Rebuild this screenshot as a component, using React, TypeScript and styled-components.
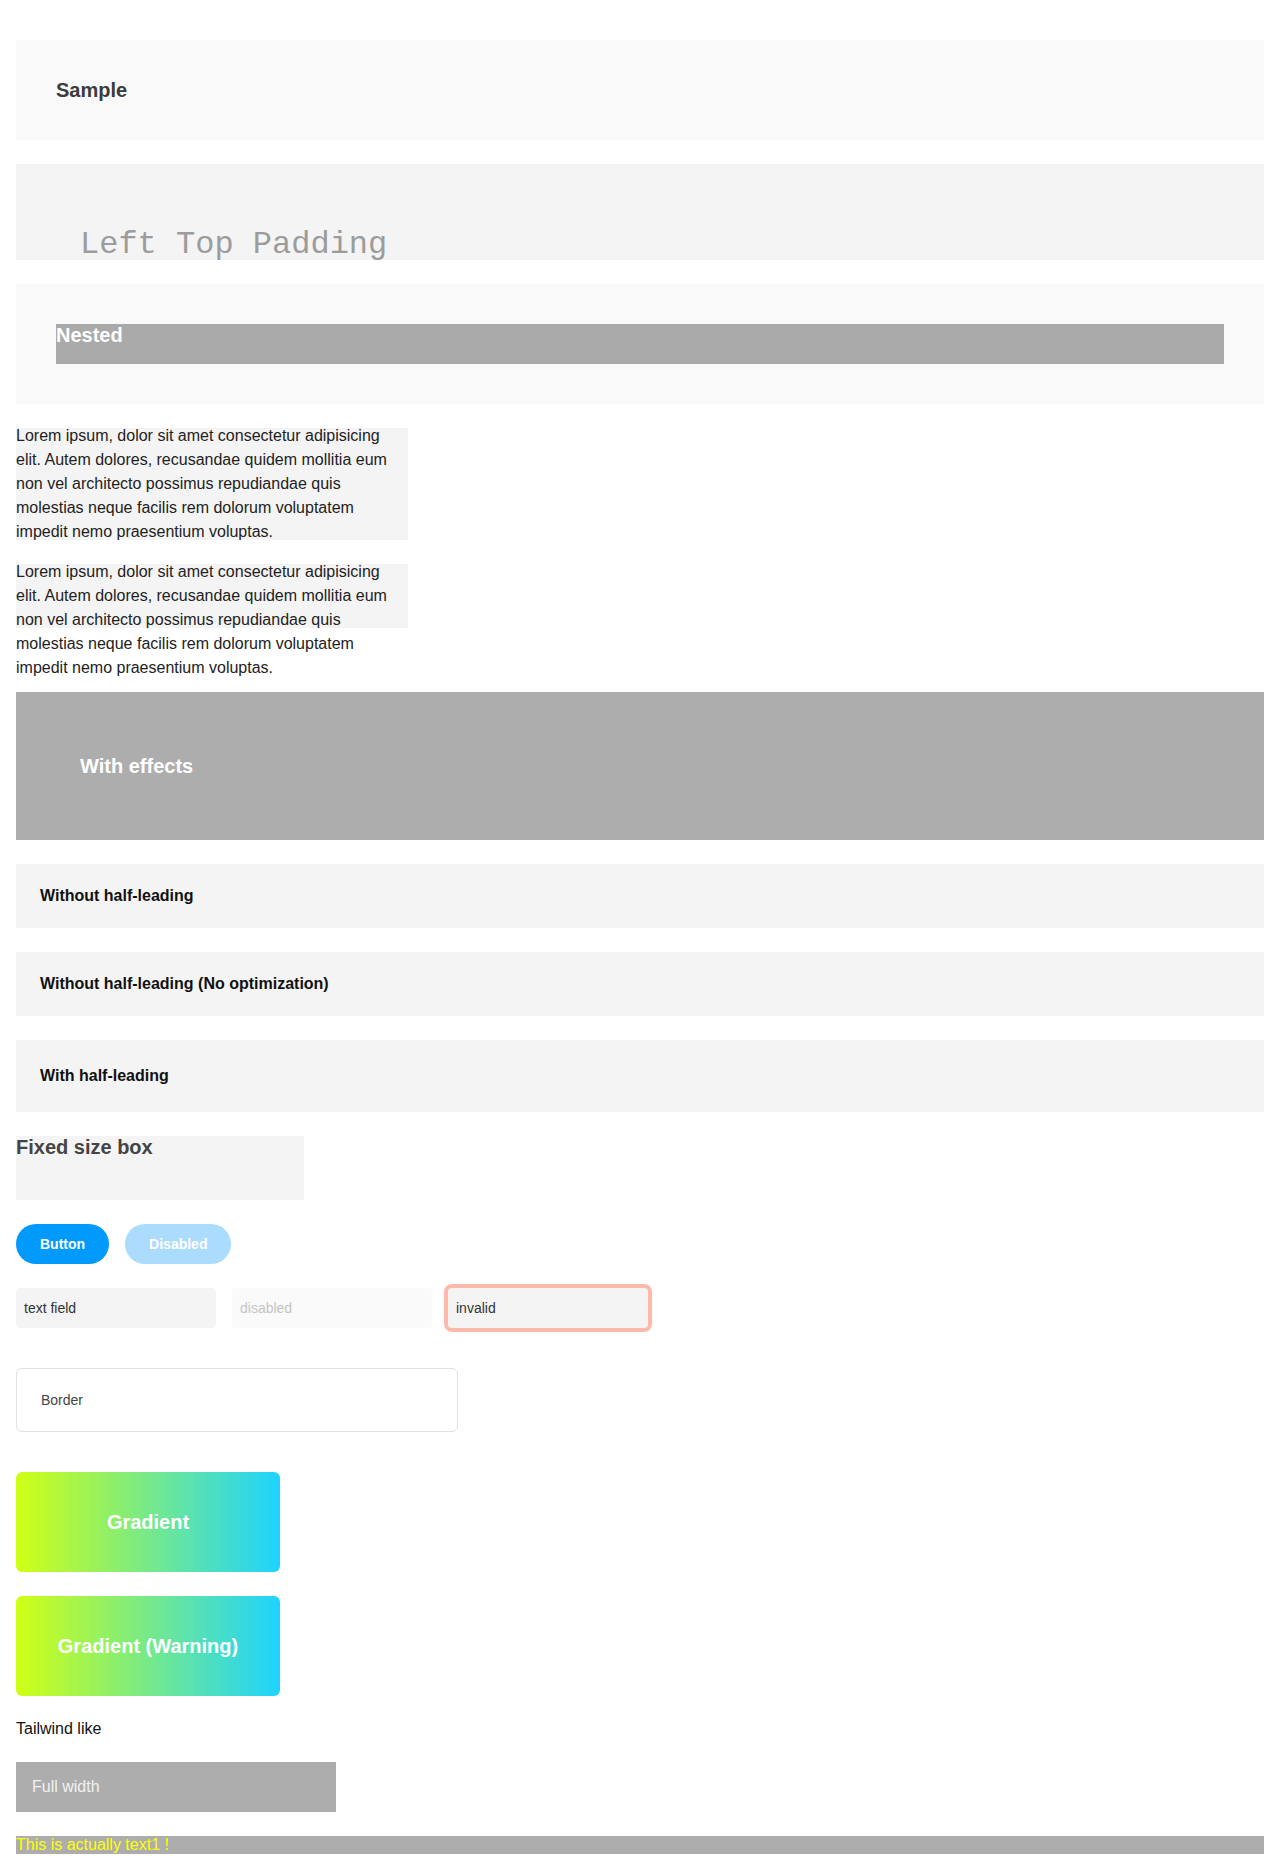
import React from "react";
import styled, { createGlobalStyle } from "styled-components";

const GlobalStyle = createGlobalStyle`
  html, body {
    margin: 0;
    padding: 0;
    background: #ffffff;
    font-family: "Liberation Sans", Arial, sans-serif;
    color: #222222;
  }
  * { box-sizing: border-box; }
`;

const Page = styled.div`
  display: flex;
  flex-direction: column;
  align-items: stretch;
  gap: 24px;
  padding: 40px 16px 0 16px;
`;

const Panel = styled.div<{ $bg?: string; $pad?: string }>`
  background: ${(p) => p.$bg ?? "#f9f9f9"};
  padding: ${(p) => p.$pad ?? "40px"};
`;

const Heading = styled.div<{ $color?: string }>`
  font-size: 20px;
  line-height: 20px;
  font-weight: 700;
  color: ${(p) => p.$color ?? "#3c3c3c"};
`;

const MonoPanel = styled.div`
  background: #f4f4f4;
  height: 96px;
  padding: 62px 0 0 64px;
  font-family: "Liberation Mono", "Courier New", monospace;
  font-size: 32px;
  color: #9c9c9c;
  white-space: nowrap;
`;

const NestedInner = styled.div`
  background: #aaaaaa;
  height: 40px;
  color: #ffffff;
  font-size: 20px;
  font-weight: 700;
`;

const Lorem = styled.div<{ $height: number; $after?: number }>`
  margin: 0 0 ${(p) => p.$after ?? 0}px 0;
  width: 392px;
  height: ${(p) => p.$height}px;
  background: #f4f4f4;
`;

const LoremText = styled.p`
  margin: -4px 0 0 0;
  font-size: 16px;
  line-height: 24px;
  color: #222222;
`;

const EffectsPanel = styled.div`
  background: #adadad;
  padding: 64px;
  font-size: 20px;
  line-height: 20px;
  font-weight: 700;
  color: #ffffff;
`;

const LeadingPanel = styled.div<{ $lh: number }>`
  background: #f4f4f4;
  padding: 24px;
  font-size: 16px;
  line-height: ${(p) => p.$lh}px;
  font-weight: 700;
  color: #111111;
`;

const FixedBox = styled.div`
  width: 288px;
  height: 64px;
  background: #f4f4f4;
  font-size: 20px;
  font-weight: 700;
  color: #444444;
`;

const ButtonRow = styled.div`
  display: flex;
  gap: 16px;
`;

const PillButton = styled.button`
  height: 40px;
  padding: 0 24px;
  border: none;
  border-radius: 20px;
  background: #0099fc;
  color: #ffffff;
  font-family: "Liberation Sans", Arial, sans-serif;
  font-size: 14px;
  font-weight: 700;
  cursor: pointer;
  &:disabled {
    background: #abdcfd;
    color: #ffffff;
    cursor: default;
  }
`;

const FieldRow = styled.div`
  display: flex;
  gap: 16px;
  margin-bottom: 16px;
`;

const Field = styled.input<{ $invalid?: boolean }>`
  width: 200px;
  height: 40px;
  padding: 0 8px;
  border: none;
  outline: none;
  border-radius: 4px;
  background: #f4f4f4;
  color: #333333;
  font-family: "Liberation Sans", Arial, sans-serif;
  font-size: 14px;
  box-shadow: ${(p) => (p.$invalid ? "0 0 0 4px #ffb9aa" : "none")};
  &:disabled {
    background: #fafafa;
    color: #c4c4c4;
    -webkit-text-fill-color: #c4c4c4;
  }
`;

const BorderBox = styled.div`
  width: 442px;
  padding: 24px;
  border: 1px solid #e2e2e2;
  border-radius: 6px;
  font-size: 14px;
  line-height: 14px;
  color: #444444;
  margin-bottom: 16px;
`;

const GradientBox = styled.div`
  width: 264px;
  height: 100px;
  border-radius: 6px;
  background: linear-gradient(90deg, #d0ff14 0%, #1ed3ff 100%);
  display: flex;
  align-items: center;
  justify-content: center;
  color: #ffffff;
  font-size: 20px;
  font-weight: 700;
`;

const PlainText = styled.div`
  font-size: 16px;
  color: #111111;
`;

const FullWidthBox = styled.div`
  width: 320px;
  padding: 16px;
  background: #adadad;
  font-size: 16px;
  line-height: 18px;
  color: #f2f2f2;
`;

const TextBar = styled.div`
  background: #adadad;
  font-size: 16px;
  line-height: 18px;
  color: #ffff00;
`;

const lorem =
  "Lorem ipsum, dolor sit amet consectetur adipisicing elit. Autem dolores, recusandae quidem mollitia eum non vel architecto possimus repudiandae quis molestias neque facilis rem dolorum voluptatem impedit nemo praesentium voluptas.";

export default function App() {
  return (
    <>
      <GlobalStyle />
      <Page>
        <Panel>
          <Heading>Sample</Heading>
        </Panel>
        <MonoPanel>Left Top Padding</MonoPanel>
        <Panel>
          <NestedInner>Nested</NestedInner>
        </Panel>
        <Lorem $height={112}>
          <LoremText>{lorem}</LoremText>
        </Lorem>
        <Lorem $height={64} $after={40}>
          <LoremText>{lorem}</LoremText>
        </Lorem>
        <EffectsPanel>With effects</EffectsPanel>
        <LeadingPanel $lh={16}>Without half-leading</LeadingPanel>
        <LeadingPanel $lh={16}>Without half-leading (No optimization)</LeadingPanel>
        <LeadingPanel $lh={24}>With half-leading</LeadingPanel>
        <FixedBox>Fixed size box</FixedBox>
        <ButtonRow>
          <PillButton>Button</PillButton>
          <PillButton disabled>Disabled</PillButton>
        </ButtonRow>
        <FieldRow>
          <Field defaultValue="text field" />
          <Field defaultValue="disabled" disabled />
          <Field defaultValue="invalid" $invalid />
        </FieldRow>
        <BorderBox>Border</BorderBox>
        <GradientBox>Gradient</GradientBox>
        <GradientBox>Gradient (Warning)</GradientBox>
        <PlainText>Tailwind like</PlainText>
        <FullWidthBox>Full width</FullWidthBox>
        <TextBar>This is actually text1 !</TextBar>
      </Page>
    </>
  );
}
